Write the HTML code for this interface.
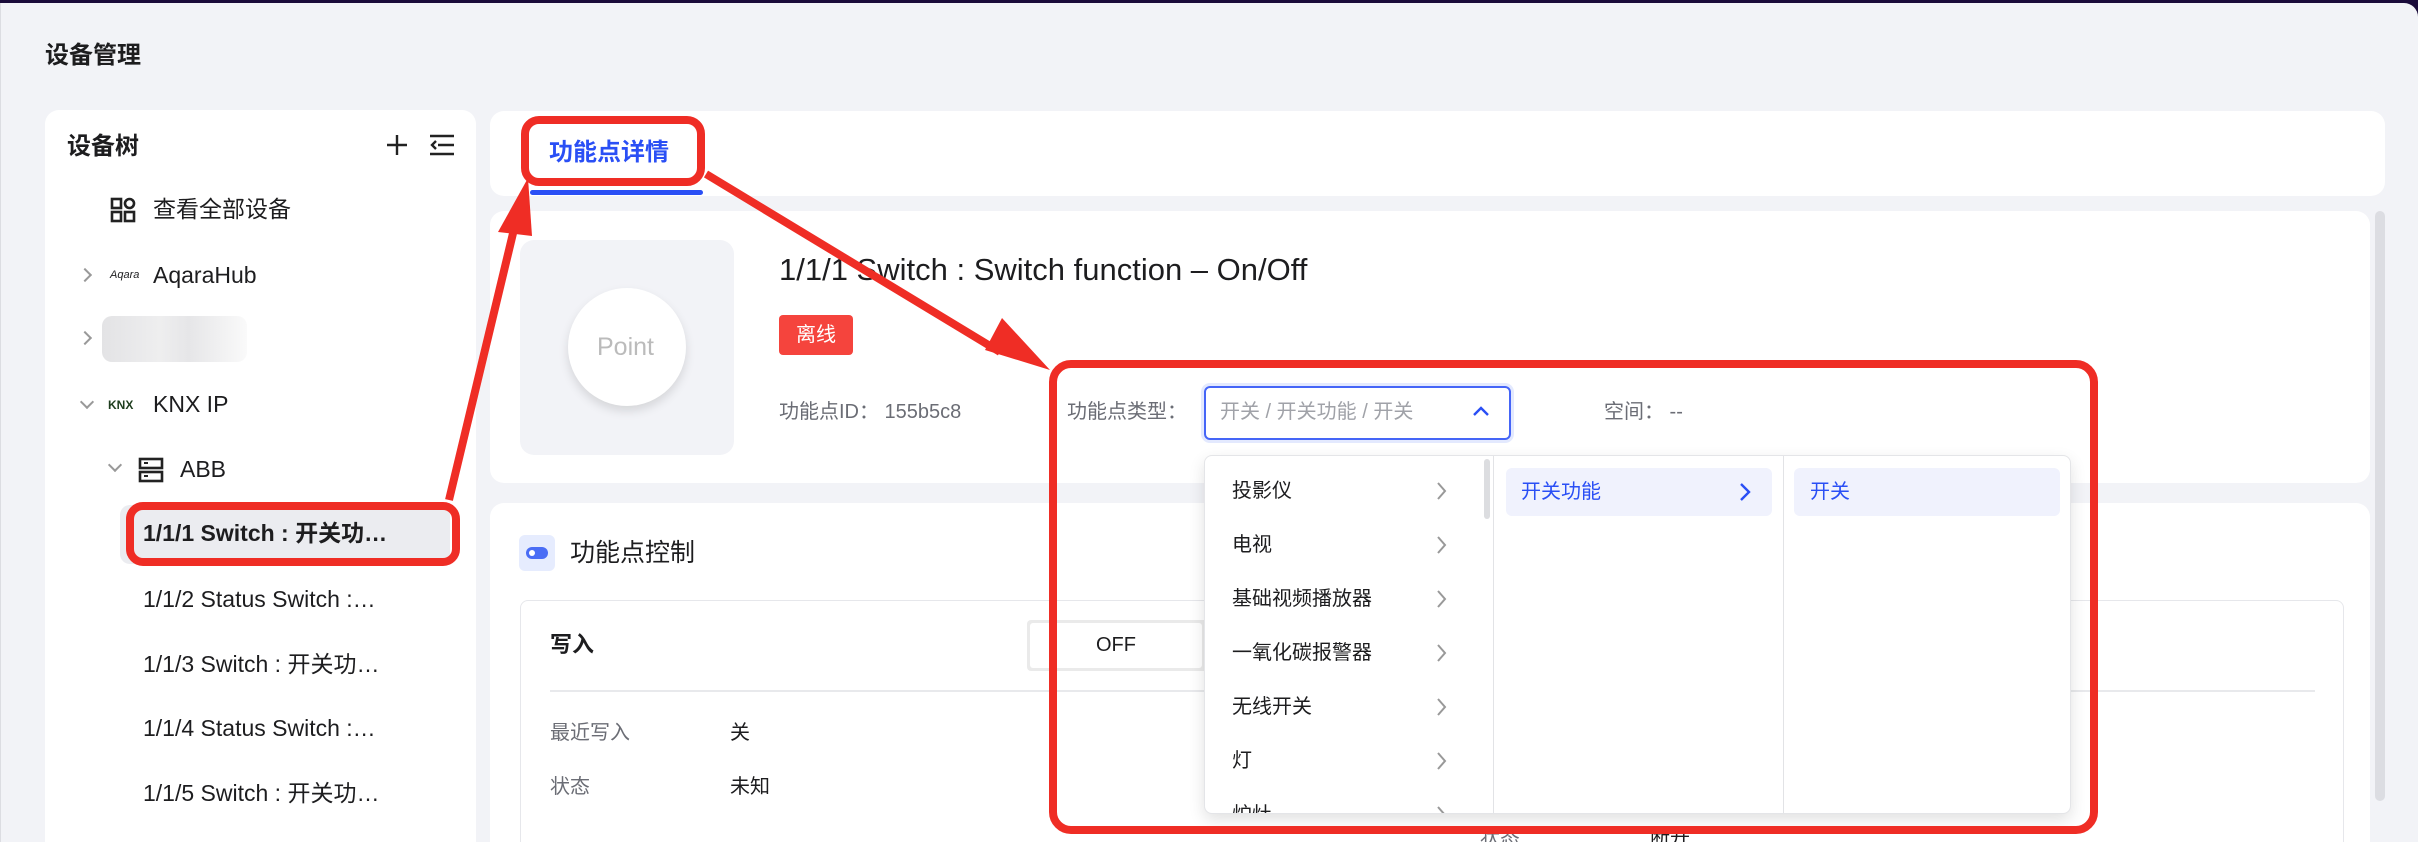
<!DOCTYPE html>
<html><head><meta charset="utf-8">
<style>
*{margin:0;padding:0;box-sizing:border-box}
html,body{width:2418px;height:842px;overflow:hidden}
body{background:#1a0b3a;font-family:"Liberation Sans","Noto Sans CJK SC",sans-serif;color:#1d1d1f;position:relative}
.frame{position:absolute;left:0;top:3px;width:2418px;height:839px;background:#f2f3f7;border-top-right-radius:14px;border-left:1px solid #dcdde2}
.a{position:absolute;white-space:nowrap;line-height:1}
.card{position:absolute;background:#fff;border-radius:14px}
.t{font-size:23px;line-height:1}
.g{color:#6b6d75}
.chev{position:absolute;width:10px;height:10px;border-right:2px solid #999;border-bottom:2px solid #999}
</style></head><body>
<div class="frame"></div>
<div class="a" style="left:45px;top:44px;font-size:24px;font-weight:bold">设备管理</div>

<div class="card" style="left:45px;top:110px;width:431px;height:760px"></div>
<div class="a" style="left:67px;top:135px;font-size:24px;font-weight:bold">设备树</div>
<svg class="a" style="left:384px;top:132px" width="26" height="26"><path d="M13 3V23M3 13H23" stroke="#222" stroke-width="2.4"/></svg>
<svg class="a" style="left:428px;top:134px" width="28" height="22"><path d="M2 2H26M10 11H26M2 20H26M8 7L4 11L8 15" stroke="#222" stroke-width="2.4" fill="none"/></svg>

<svg class="a" style="left:110px;top:197px" width="26" height="26"><g fill="none" stroke="#222" stroke-width="2.6"><rect x="2" y="2" width="9" height="9"/><rect x="15" y="2" width="9" height="9" rx="4.5"/><rect x="2" y="15" width="9" height="9"/><rect x="15" y="15" width="9" height="9"/></g></svg>
<div class="a t" style="left:153px;top:198px">查看全部设备</div>

<div class="chev" style="left:80px;top:270px;transform:rotate(-45deg)"></div>
<div class="a" style="left:110px;top:270px;font-size:11px;font-style:italic">Aqara</div>
<div class="a t" style="left:153px;top:264px">AqaraHub</div>

<div class="chev" style="left:80px;top:333px;transform:rotate(-45deg)"></div>
<div class="a" style="left:102px;top:316px;width:145px;height:46px;border-radius:10px;background:linear-gradient(90deg,#e3e3e5,#eeeeef 40%,#e6e6e8 60%,#fafafa)"></div>

<div class="chev" style="left:82px;top:397px;transform:rotate(45deg)"></div>
<div class="a" style="left:108px;top:399px;font-size:12px;font-weight:bold;color:#1e3d1e">KNX</div>
<div class="a t" style="left:153px;top:393px">KNX IP</div>

<div class="chev" style="left:110px;top:460px;transform:rotate(45deg)"></div>
<svg class="a" style="left:138px;top:457px" width="26" height="26"><g fill="none" stroke="#222" stroke-width="2.6"><rect x="2" y="2" width="22" height="9"/><rect x="2" y="15" width="22" height="9"/></g><path d="M6 6H10M6 19H10" stroke="#222" stroke-width="2"/></svg>
<div class="a t" style="left:180px;top:458px">ABB</div>

<div class="a" style="left:120px;top:505px;width:330px;height:59px;background:#ebecf0;border-radius:10px"></div>
<div class="a t" style="left:143px;top:522px;font-weight:bold">1/1/1 Switch : 开关功…</div>
<div class="a t" style="left:143px;top:588px">1/1/2 Status Switch :…</div>
<div class="a t" style="left:143px;top:653px">1/1/3 Switch : 开关功…</div>
<div class="a t" style="left:143px;top:717px">1/1/4 Status Switch :…</div>
<div class="a t" style="left:143px;top:782px">1/1/5 Switch : 开关功…</div>

<div class="card" style="left:490px;top:111px;width:1895px;height:85px"></div>
<div class="a" style="left:549px;top:141px;font-size:24px;font-weight:bold;color:#2a4ff5">功能点详情</div>
<div class="a" style="left:530px;top:190px;width:173px;height:5px;background:#2a4ff5;border-radius:3px"></div>

<div class="card" style="left:490px;top:211px;width:1880px;height:272px"></div>
<div class="a" style="left:2375px;top:211px;width:10px;height:590px;background:#dcdde2;border-radius:5px"></div>
<div class="a" style="left:520px;top:240px;width:214px;height:215px;background:#f2f3f7;border-radius:14px"></div>
<div class="a" style="left:568px;top:288px;width:118px;height:118px;border-radius:50%;background:#fff;box-shadow:0 5px 10px rgba(0,0,0,.12)"></div>
<div class="a" style="left:597px;top:335px;font-size:25px;color:#bbb">Point</div>
<div class="a" style="left:779px;top:254px;font-size:31px">1/1/1 Switch : Switch function – On/Off</div>
<div class="a" style="left:779px;top:315px;width:74px;height:40px;background:#f5443d;border-radius:4px;color:#fff;font-size:20px;text-align:center;line-height:40px">离线</div>
<div class="a g" style="left:779px;top:402px;font-size:20px">功能点ID：  155b5c8</div>
<div class="a g" style="left:1067px;top:402px;font-size:20px">功能点类型：</div>
<div class="a" style="left:1204px;top:386px;width:307px;height:54px;border:2px solid #4565f7;border-radius:6px;box-shadow:0 0 0 3px #e3e9fe"></div>
<div class="a" style="left:1220px;top:402px;font-size:20px;color:#a0a2a8">开关 / 开关功能 / 开关</div>
<svg class="a" style="left:1472px;top:404px" width="18" height="14"><path d="M2 11L9 4L16 11" stroke="#2a4ff5" stroke-width="2.4" fill="none"/></svg>
<div class="a g" style="left:1604px;top:402px;font-size:20px">空间：  --</div>

<div class="card" style="left:490px;top:503px;width:1880px;height:400px"></div>
<div class="a" style="left:519px;top:535px;width:36px;height:36px;background:#e6ecfe;border-radius:6px"></div>
<div class="a" style="left:526px;top:547px;width:22px;height:12px;border-radius:6px;background:#4a6df5"></div>
<div class="a" style="left:529px;top:550px;width:6px;height:6px;border-radius:3px;background:#fff"></div>
<div class="a" style="left:570px;top:541px;font-size:25px">功能点控制</div>
<div class="a" style="left:520px;top:600px;width:1824px;height:300px;border:1px solid #e6e7eb;border-radius:8px"></div>
<div class="a" style="left:550px;top:634px;font-size:22px;font-weight:bold">写入</div>
<div class="a" style="left:1027px;top:620px;width:200px;height:51px;background:#eaeaea;border-radius:4px"></div>
<div class="a" style="left:1030px;top:623px;width:172px;height:45px;background:#fff;border-radius:3px;text-align:center;line-height:45px;font-size:20px">OFF</div>
<div class="a" style="left:550px;top:690px;width:1765px;height:2px;background:#e8e9ec"></div>
<div class="a g" style="left:550px;top:723px;font-size:20px">最近写入</div>
<div class="a" style="left:730px;top:723px;font-size:20px">关</div>
<div class="a g" style="left:550px;top:777px;font-size:20px">状态</div>
<div class="a" style="left:730px;top:777px;font-size:20px">未知</div>
<div class="a g" style="left:1480px;top:828px;font-size:20px">状态</div>
<div class="a" style="left:1650px;top:828px;font-size:20px">断开</div>

<div class="a" style="left:1204px;top:455px;width:867px;height:359px;background:#fff;border:1px solid #e4e5e8;border-radius:8px;box-shadow:0 6px 16px rgba(0,0,0,.12);overflow:hidden">
 <div class="a" style="left:288px;top:0;width:1px;height:359px;background:#e2e3e6"></div>
 <div class="a" style="left:578px;top:0;width:1px;height:359px;background:#e2e3e6"></div>
 <div class="a" style="left:279px;top:3px;width:6px;height:60px;background:#dcdde0;border-radius:3px"></div>
 <div class="a" style="left:301px;top:12px;width:266px;height:48px;background:#f0f2fd;border-radius:6px"></div>
 <div class="a" style="left:316px;top:26px;font-size:20px;color:#2a4ff5">开关功能</div>
 <svg class="a" style="left:533px;top:26px" width="14" height="20"><path d="M3 2L11 10L3 18" stroke="#2a4ff5" stroke-width="2.4" fill="none"/></svg>
 <div class="a" style="left:589px;top:12px;width:266px;height:48px;background:#f0f2fd;border-radius:6px"></div>
 <div class="a" style="left:605px;top:26px;font-size:20px;color:#2a4ff5">开关</div>
 <div class="a" style="left:27px;top:8px;font-size:20px;line-height:54px">投影仪<br>电视<br>基础视频播放器<br>一氧化碳报警器<br>无线开关<br>灯<br>炉灶</div>
 <svg class="a" style="left:230px;top:25px" width="14" height="360"><g stroke="#999" stroke-width="2" fill="none"><path d="M3 2L10 10L3 18"/><path d="M3 56L10 64L3 72"/><path d="M3 110L10 118L3 126"/><path d="M3 164L10 172L3 180"/><path d="M3 218L10 226L3 234"/><path d="M3 272L10 280L3 288"/><path d="M3 326L10 334L3 342"/></g></svg>
</div>

<svg class="a" style="left:0;top:0" width="2418" height="842">
<g fill="none" stroke="#ef2d25" stroke-width="8" stroke-linejoin="round">
<rect x="525" y="120" width="176" height="62" rx="14"/>
<rect x="130" y="506" width="326" height="56" rx="13"/>
<rect x="1053" y="364" width="1041" height="466" rx="18"/>
<path d="M449 500L515 225"/>
<path d="M706 174L1000 352"/>
</g>
<g fill="#ef2d25">
<path d="M528 178L498 232L532 236Z"/>
<path d="M1050 370L1002 318L985 350Z"/>
</g>
</svg>
</body></html>
